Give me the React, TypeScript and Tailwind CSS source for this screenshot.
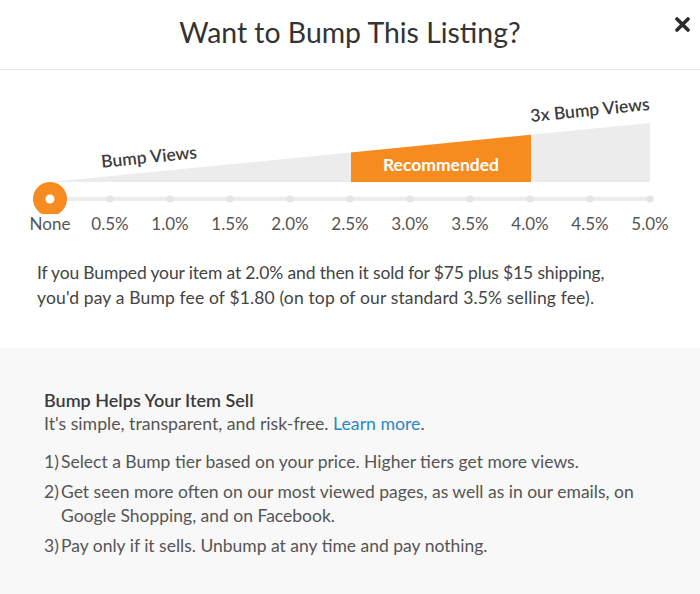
import type React from "react";

const ticks = ["None", "0.5%", "1.0%", "1.5%", "2.0%", "2.5%", "3.0%", "3.5%", "4.0%", "4.5%", "5.0%"];

const ORANGE = "#f68b1f";

function BumpChart(): React.ReactElement {
  // wedge runs from (50,112) up to (650,53) in svg coords (page y - 70)
  const topAt = (x: number) => 112 - ((x - 50) * 59) / 600;
  return (
    <svg width="700" height="144" viewBox="0 0 700 144" className="block">
      <polygon points={`50,112 650,${topAt(650)} 650,112`} fill="#ececec" />
      <polygon
        points={`351,${topAt(351)} 531,${topAt(531)} 531,112 351,112`}
        fill={ORANGE}
      />
      <text
        x="441"
        y="101"
        textAnchor="middle"
        fill="#ffffff"
        fontSize="17.5"
        fontWeight="700"
        fontFamily="Lato, 'Open Sans', sans-serif"
      >
        Recommended
      </text>
      <text
        x="149"
        y="93"
        textAnchor="middle"
        fill="#3d3d3d"
        fontSize="17.5"
        fontWeight="600"
        fontFamily="Lato, 'Open Sans', sans-serif"
        transform="rotate(-5.8 149 87)"
      >
        Bump Views
      </text>
      <text
        x="590"
        y="46"
        textAnchor="middle"
        fill="#3d3d3d"
        fontSize="17.5"
        fontWeight="600"
        fontFamily="Lato, 'Open Sans', sans-serif"
        transform="rotate(-5.8 590 40)"
      >
        3x Bump Views
      </text>
      <rect x="50" y="127" width="600" height="4" rx="2" fill="#ececec" />
      {ticks.map((_, i) => (
        <circle key={i} cx={50 + i * 60} cy="129" r="3.5" fill="#e4e4e4" />
      ))}
      <circle cx="50" cy="129" r="17" fill={ORANGE} />
      <circle cx="50" cy="129" r="4.5" fill="#ffffff" />
    </svg>
  );
}

export default function App(): React.ReactElement {
  return (
    <div
      className="w-[700px] h-[594px] bg-white text-[#444] overflow-hidden"
      style={{ fontFamily: "Lato, 'Open Sans', sans-serif" }}
    >
      <header className="relative flex h-[70px] items-center justify-center border-b border-[#e6e6e6]">
        <h1 className="text-[28.4px] leading-none text-[#333] pb-[4px]">Want to Bump This Listing?</h1>
        <button
          type="button"
          className="absolute right-[8px] top-[14px] flex h-[20px] w-[20px] items-center justify-center"
        >
          <svg width="15" height="15" viewBox="0 0 15 15">
            <path d="M2 2 L13 13 M13 2 L2 13" stroke="#2b2b2b" strokeWidth="3.6" strokeLinecap="round" />
          </svg>
        </button>
      </header>

      <BumpChart />

      <div className="flex pl-[20px]">
        {ticks.map((t) => (
          <span key={t} className="w-[60px] text-center text-[17px] leading-[20px] text-[#555]">
            {t}
          </span>
        ))}
      </div>

      <p className="mt-[26px] px-[37px] text-[17.5px] leading-[25px] text-[#444] whitespace-nowrap">
        <span className="tracking-[-0.15px]">
          If you Bumped your item at 2.0% and then it sold for $75 plus $15 shipping,
        </span>
        <br />
        <span className="tracking-[0.15px]">
          you'd pay a Bump fee of $1.80 (on top of our standard 3.5% selling fee).
        </span>
      </p>

      <section className="mt-[38px] h-[260px] bg-[#f8f8f8] px-[44px] pt-[40px] leading-[24px]">
        <h2 className="text-[18px] font-semibold text-[#3a3a3a]">Bump Helps Your Item Sell</h2>
        <p className="text-[17.7px] text-[#555]">
          It's simple, transparent, and risk-free.{" "}
          <a className="text-[#2a88c6]">Learn more</a>.
        </p>
        <ol className="mt-[14px] flex flex-col gap-[6px] text-[17.5px] text-[#555] whitespace-nowrap">
          <li className="flex">
            <span className="w-[17px] shrink-0">1)</span>
            <span>Select a Bump tier based on your price. Higher tiers get more views.</span>
          </li>
          <li className="flex">
            <span className="w-[17px] shrink-0">2)</span>
            <span>
              Get seen more often on our most viewed pages, as well as in our emails, on
              <br />
              Google Shopping, and on Facebook.
            </span>
          </li>
          <li className="flex">
            <span className="w-[17px] shrink-0">3)</span>
            <span>Pay only if it sells. Unbump at any time and pay nothing.</span>
          </li>
        </ol>
      </section>
    </div>
  );
}
